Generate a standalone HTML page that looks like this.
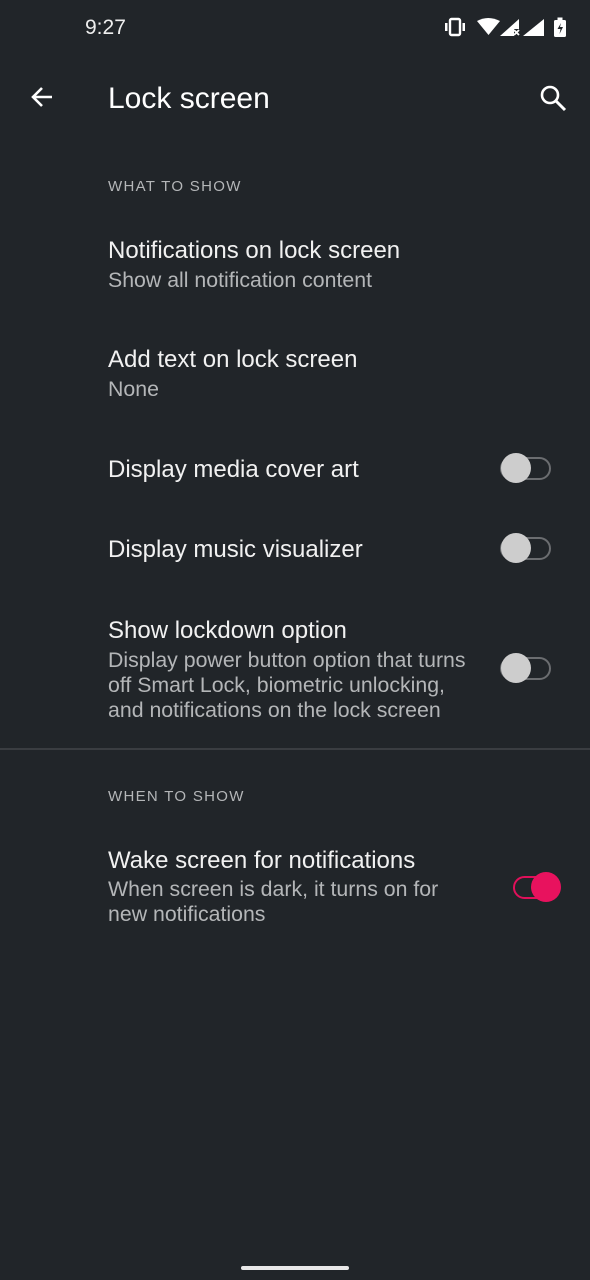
<!DOCTYPE html>
<html><head><style>
body{margin:0;width:590px;height:1280px;background:#212529;font-family:"Liberation Sans",sans-serif;position:relative;overflow:hidden;color:#fff}
.a{position:absolute;white-space:nowrap}
.t{font-size:24px;color:#f1f1f1}
.s{font-size:21.3px;color:#b4b6b8;line-height:25px}
.h{font-size:15px;color:#b4b6b8;letter-spacing:1.3px}
.sw{position:absolute;width:47px;height:19px;border:2px solid #6b6d70;border-radius:12px}
.th{position:absolute;width:30px;height:30px;border-radius:50%;background:#cdcdcd}
</style></head><body>
<div class="a" style="left:85px;top:16px;font-size:21px;color:#eee">9:27</div>
<svg class="a" style="left:444px;top:16px" width="130" height="24" viewBox="0 0 130 24">
<g fill="#fff">
<rect x="6" y="3" width="10" height="16" rx="1.5" fill="none" stroke="#fff" stroke-width="2.4"/>
<rect x="1" y="7" width="2.5" height="8"/><rect x="18.5" y="7" width="2.5" height="8"/>
<path d="M33 5 Q44 -1 56 5 L44.5 19 Z"/>
<path d="M56 20 L75 3 L75 13 L70 13 L70 20 Z"/>
<path d="M70 14 l5 5 M75 14 l-5 5" stroke="#fff" stroke-width="1.8"/>
<path d="M79 20 L100 3 L100 20 Z"/>
<rect x="110" y="4" width="12" height="17" rx="1.5"/><rect x="113.5" y="1.5" width="5" height="3"/>
<path d="M117 7 L113.5 13 L116.5 13 L115.5 18 L119 11 L116 11 Z" fill="#212529"/>
</g></svg>
<svg class="a" style="left:28px;top:84px" width="28" height="28" viewBox="0 0 28 28"><path d="M24 13H6M14 4L5 13L14 22" stroke="#fff" stroke-width="2.6" fill="none"/></svg>
<div class="a" style="left:108px;top:82px;font-size:30px;color:#fff">Lock screen</div>
<svg class="a" style="left:538px;top:82px" width="30" height="30" viewBox="0 0 30 30"><circle cx="12" cy="13" r="8" stroke="#fff" stroke-width="2.6" fill="none"/><path d="M18 19L27 28" stroke="#fff" stroke-width="3"/></svg>

<div class="a h" style="left:108px;top:178px">WHAT TO SHOW</div>
<div class="a t" style="left:108px;top:237px">Notifications on lock screen</div>
<div class="a s" style="left:108px;top:268px">Show all notification content</div>
<div class="a t" style="left:108px;top:346px">Add text on lock screen</div>
<div class="a s" style="left:108px;top:377px">None</div>
<div class="a t" style="left:108px;top:456px">Display media cover art</div>
<div class="sw" style="left:500px;top:457px"></div><div class="th" style="left:501px;top:453px"></div>
<div class="a t" style="left:108px;top:536px">Display music visualizer</div>
<div class="sw" style="left:500px;top:537px"></div><div class="th" style="left:501px;top:533px"></div>
<div class="a t" style="left:108px;top:617px">Show lockdown option</div>
<div class="a s" style="left:108px;top:648px">Display power button option that turns<br>off Smart Lock, biometric unlocking,<br>and notifications on the lock screen</div>
<div class="sw" style="left:500px;top:657px"></div><div class="th" style="left:501px;top:653px"></div>
<div class="a" style="left:0;top:748px;width:590px;height:2px;background:#3a3d41"></div>
<div class="a h" style="left:108px;top:788px">WHEN TO SHOW</div>
<div class="a t" style="left:108px;top:847px">Wake screen for notifications</div>
<div class="a s" style="left:108px;top:877px">When screen is dark, it turns on for<br>new notifications</div>
<div class="sw" style="left:513px;top:876px;width:40px;border-color:#e0105a"></div><div class="th" style="left:531px;top:872px;background:#e8125e"></div>
<div class="a" style="left:241px;top:1266px;width:108px;height:4px;border-radius:2px;background:#e8e8e8"></div>
</body></html>
